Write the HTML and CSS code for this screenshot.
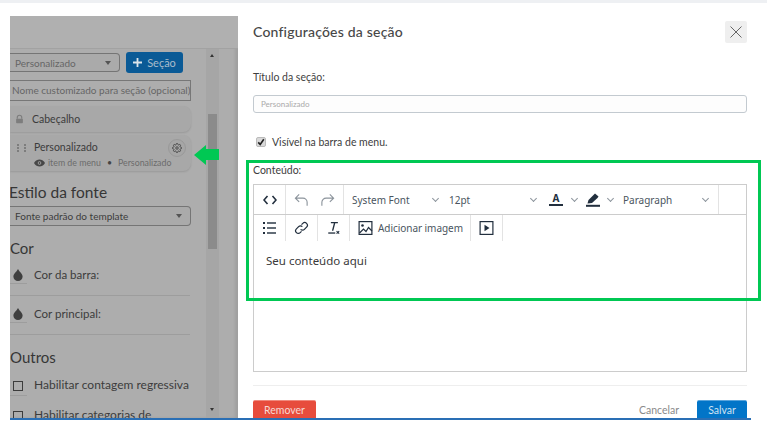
FILE: index.html
```html
<!DOCTYPE html>
<html lang="pt-BR">
  <head>
    <meta charset="UTF-8" />
    <title>Configurações da seção</title>
    <link rel="stylesheet" href="styles.css">
  </head>
  <body>
    <div class="top-strip"></div>
    <div class="shot">
      <div class="backdrop">
        <div class="backdrop-head"></div>
        <div class="backdrop-main">
          <div class="side-list">
            <div class="add-row">
              <div class="fake-select add-select"><span>Personalizado</span><i class="caret"></i></div>
              <div class="add-button">
                <svg viewBox="0 0 10 10"><path d="M4 0h2v4h4v2H6v4H4V6H0V4h4z" fill="#dce4ea"/></svg>
                <span>Seção</span>
              </div>
            </div>
            <div class="name-input">Nome customizado para seção (opcional)</div>
            <div class="section-card locked">
              <svg class="lock" viewBox="0 0 12 12"><path d="M3 5.500V4a3 3 0 0 1 6 0v1.500" fill="none" stroke="#7d7d7d" stroke-width="1.500"/><rect x="1.500" y="5.500" width="9" height="6" rx="1" fill="#7d7d7d"/></svg>
              <span>Cabeçalho</span>
            </div>
            <div class="section-card custom">
              <svg class="grip" viewBox="0 0 9 8" fill="#7d7d7d"><rect width="2" height="2"/><rect y="3" width="2" height="2"/><rect y="6" width="2" height="2"/><rect x="7" width="2" height="2"/><rect x="7" y="3" width="2" height="2"/><rect x="7" y="6" width="2" height="2"/></svg>
              <div class="custom-text">
                <div class="custom-name">Personalizado</div>
                <div class="custom-meta">
                  <svg class="eye" viewBox="0 0 14 10"><path d="M0 5c2-3.500 4.500-4.500 7-4.500S12 1.500 14 5c-2 3.500-4.500 4.500-7 4.500S2 8.500 0 5z" fill="#474747"/><circle cx="7" cy="5" r="2.300" fill="#a6a6a6"/><circle cx="7" cy="5" r="1.200" fill="#474747"/></svg>
                  <span>item de menu</span><em>•</em><span>Personalizado</span>
                </div>
              </div>
              <div class="gear">
                <svg viewBox="0 0 24 24" fill="none" stroke="#3c3c3c" stroke-width="2"><circle cx="12" cy="12" r="3"/><path d="M19.400 15a1.700 1.700 0 0 0 .3 1.800l.1.100a2 2 0 1 1-2.900 2.900l-.1-.1a1.700 1.700 0 0 0-2.800 1.200V21a2 2 0 1 1-4 0v-.1a1.700 1.700 0 0 0-2.900-1.200l-.1.100a2 2 0 1 1-2.800-2.900l.1-.1a1.700 1.700 0 0 0-1.200-2.800H3a2 2 0 1 1 0-4h.1a1.700 1.700 0 0 0 1.200-2.900l-.1-.1a2 2 0 1 1 2.900-2.800l.1.100a1.700 1.700 0 0 0 1.800.3h.1a1.700 1.700 0 0 0 1-1.500V3a2 2 0 1 1 4 0v.1a1.700 1.700 0 0 0 2.800 1.200l.1-.1a2 2 0 1 1 2.900 2.800l-.1.100a1.700 1.700 0 0 0-.3 1.800v.1a1.700 1.700 0 0 0 1.500 1H21a2 2 0 1 1 0 4h-.1a1.700 1.700 0 0 0-1.500 1z"/></svg>
              </div>
            </div>
            <h4 class="font-title">Estilo da fonte</h4>
            <div class="fake-select font-select"><span>Fonte padrão do template</span><i class="caret"></i></div>
            <h4 class="color-title">Cor</h4>
            <div class="color-row">
              <div class="swatch"><svg class="drop" viewBox="0 0 10 13"><path d="M5 0c1 2.500 5 5 5 8.200A5 4.800 0 0 1 0 8.200C0 5 4 2.500 5 0z" fill="#3f3f3f"/></svg></div>
              <span>Cor da barra:</span>
            </div>
            <div class="color-row">
              <div class="swatch"><svg class="drop" viewBox="0 0 10 13"><path d="M5 0c1 2.500 5 5 5 8.200A5 4.800 0 0 1 0 8.200C0 5 4 2.500 5 0z" fill="#3f3f3f"/></svg></div>
              <span>Cor principal:</span>
            </div>
            <h4 class="others-title">Outros</h4>
            <div class="check-row"><div class="swatch"><i class="box"></i></div><span>Habilitar contagem regressiva</span></div>
            <div class="check-row"><div class="swatch"><i class="box"></i></div><span>Habilitar categorias de</span></div>
          </div>
          <div class="scrollbar">
            <i class="arrow-up"></i>
            <div class="thumb"></div>
            <i class="arrow-down"></i>
          </div>
        </div>
      </div>

      <div class="modal">
        <div class="modal-head">
          <h3>Configurações da seção</h3>
          <button class="close-button">
            <svg viewBox="0 0 12 12" fill="none" stroke="#666" stroke-width="1"><path d="M.5.5l11 11M11.500.5l-11 11"/></svg>
          </button>
        </div>
        <label class="field-label">Título da seção:</label>
        <div class="title-input">Personalizado</div>
        <div class="visible-row">
          <i class="checked">
            <svg viewBox="0 0 10 10" fill="none" stroke="#222" stroke-width="2"><path d="M1.500 5.500l2.500 2.500 4.500-6.500"/></svg>
          </i>
          <span>Visível na barra de menu.</span>
        </div>
        <label class="content-label">Conteúdo:</label>
        <div class="editor">
          <div class="tool-row first">
            <div class="tool-group w-32">
              <svg class="ico" viewBox="0 0 14 10" fill="none" stroke="#222f3e" stroke-width="1.600"><path d="M4.500 1L1 5l3.500 4M9.500 1L13 5 9.500 9"/></svg>
            </div>
            <div class="tool-group w-58">
              <svg class="ico big" viewBox="0 0 16 14" fill="none" stroke="#8c949c" stroke-width="1.200"><path d="M5.500 1L1.500 5l4 4M1.500 5h8a4.500 4.500 0 0 1 4.500 4.500V13"/></svg>
              <svg class="ico big" viewBox="0 0 16 14" fill="none" stroke="#8c949c" stroke-width="1.200"><path d="M10.500 1l4 4-4 4M14.500 5h-8A4.500 4.500 0 0 0 2 9.500V13"/></svg>
            </div>
            <div class="tool-group w-375">
              <span class="menu-text font-name">System Font</span><i class="chev"></i>
              <span class="menu-text size-name">12pt</span><i class="chev"></i>
              <span class="color-a">A</span><i class="chev a-chev"></i>
              <svg class="pen" viewBox="0 0 14 14"><path d="M1.500 10.500l1-3.500L8 1.500l1-1 3.500 3-1 1.500-5.500 5z" fill="#222f3e"/><rect y="11.800" width="14" height="2" fill="#222f3e"/></svg><i class="chev pen-chev"></i>
              <span class="menu-text para-name">Paragraph</span><i class="chev"></i>
            </div>
          </div>
          <div class="tool-row second">
            <div class="tool-group w-32">
              <svg class="ico list" viewBox="0 0 13 12" fill="#222f3e"><rect width="2" height="2" y="0"/><rect width="2" height="2" y="5"/><rect width="2" height="2" y="10"/><rect x="4" width="9" height="1.400" y=".3"/><rect x="4" width="9" height="1.400" y="5.300"/><rect x="4" width="9" height="1.400" y="10.300"/></svg>
            </div>
            <div class="tool-group w-32">
              <svg class="ico big" viewBox="0 0 16 16" fill="none" stroke="#222f3e" stroke-width="1.400"><path d="M7 9.500a3 3 0 0 0 4.300 0l2.500-2.500a3 3 0 0 0-4.300-4.300L8 4.200"/><path d="M9 6.500a3 3 0 0 0-4.300 0L2.200 9a3 3 0 0 0 4.300 4.300L8 11.800"/></svg>
            </div>
            <div class="tool-group w-32">
              <svg class="ico big" viewBox="0 0 16 16"><path d="M5 1h8v1.500h-3L7.800 11H6.200L8.400 2.500H5z" fill="#222f3e"/><rect x="2" y="13" width="8" height="1.500" fill="#222f3e"/><path d="M11.500 11.500l3 3M14.500 11.500l-3 3" stroke="#222f3e" stroke-width="1.200"/></svg>
            </div>
            <div class="tool-group image-tool">
              <svg class="ico big" viewBox="0 0 14 14" fill="none" stroke="#222f3e" stroke-width="1.200"><rect x=".6" y=".6" width="12.800" height="12.800"/><circle cx="4" cy="4.500" r="1.300" fill="#222f3e" stroke="none"/><path d="M1 12l4-4 2.500 2.500L10 6.500l3.500 3.500"/></svg>
              <span class="menu-text">Adicionar imagem</span>
            </div>
            <div class="tool-group w-32">
              <svg class="ico big" viewBox="0 0 14 14"><rect x=".6" y=".6" width="12.800" height="12.800" fill="none" stroke="#222f3e" stroke-width="1.200"/><path d="M5 3.800l5 3.200-5 3.200z" fill="#222f3e"/></svg>
            </div>
          </div>
          <div class="editor-body">Seu conteúdo aqui</div>
        </div>
        <div class="modal-foot">
          <button class="remove-button">Remover</button>
          <span class="cancel-link">Cancelar</span>
          <button class="save-button">Salvar</button>
        </div>
      </div>
    </div>

    <div class="green-box"></div>
    <svg class="green-arrow" viewBox="0 0 25 20"><path d="M0 10L12 0v4h13v11H12v5z" fill="#00c853"/></svg>
  </body>
</html>
```

FILE: styles.css
```css
html,
body {
  margin: 0;
  height: 436px;
  overflow: hidden;
  background: white;
}
body {
  font-family: Lato, "Liberation Sans", sans-serif;
  position: relative;
}
h3,
h4 {
  margin: 0;
  font-weight: 400;
}
button {
  font-family: inherit;
  border: none;
  padding: 0;
}
.top-strip {
  height: 3px;
  background-color: #eef0f3;
}
.shot {
  display: flex;
  width: 741px;
  height: 402px;
  margin: 13px 0 0 10px;
  border-bottom: 2px solid #2a6fb5;
}

/* painel de tras, escurecido */
.backdrop {
  width: 228px;
  flex: none;
  background-color: #adadad;
  display: flex;
  flex-direction: column;
  overflow: hidden;
  box-shadow: inset -3px 0 3px rgba(0, 0, 0, 0.08);
}
.backdrop-head {
  height: 32px;
  flex: none;
  background-color: #b0b0b0;
  border-bottom: 1px solid #a2a2a2;
}
.backdrop-main {
  display: flex;
  flex: 1;
  min-height: 0;
}
.side-list {
  width: 196px;
  flex: none;
  color: #3c3c3c;
}
.add-row {
  display: flex;
  gap: 6px;
  margin-top: 3px;
}
.fake-select {
  display: flex;
  align-items: center;
  justify-content: space-between;
  box-sizing: border-box;
  border: 1px solid #757575;
  border-left: none;
  border-radius: 0 4px 4px 0;
  background-color: #aaa;
  font-size: 10px;
  padding: 0 8px 0 5px;
}
.add-select {
  width: 110px;
  height: 19px;
  margin-top: 1px;
  color: #666;
}
.caret {
  width: 0;
  height: 0;
  border-left: 3px solid transparent;
  border-right: 3px solid transparent;
  border-top: 4px solid #555;
}
.add-button {
  display: flex;
  align-items: center;
  justify-content: center;
  gap: 5px;
  width: 57px;
  height: 21px;
  border-radius: 3px;
  background-color: #0a5a96;
  color: #a9bccb;
  font-size: 11px;
}
.add-button svg {
  width: 9px;
  height: 9px;
}
.name-input {
  box-sizing: border-box;
  width: 181px;
  height: 21px;
  margin-top: 7px;
  border: 1px solid #777;
  border-left: none;
  font-size: 10px;
  line-height: 19px;
  padding-left: 2px;
  color: #666;
  white-space: nowrap;
  overflow: hidden;
}
.section-card {
  box-sizing: border-box;
  width: 181px;
  border-radius: 0 8px 8px 0;
  background-color: #a8a8a8;
  box-shadow: 0 1px 2px rgba(0, 0, 0, 0.12);
  display: flex;
}
.locked {
  height: 26px;
  margin-top: 5px;
  align-items: center;
  padding-left: 5px;
  font-size: 10.500px;
  gap: 8px;
}
.lock {
  width: 9px;
  height: 10px;
}
.custom {
  height: 36px;
  margin-top: 3px;
  padding: 6px 0 0 7px;
  position: relative;
}
.grip {
  width: 9px;
  height: 8px;
  margin-top: 3px;
  flex: none;
}
.custom-text {
  margin-left: 8px;
}
.custom-name {
  font-size: 10.500px;
  line-height: 13px;
}
.custom-meta {
  display: flex;
  align-items: center;
  gap: 2px;
  margin-top: 3px;
  font-size: 8.800px;
  line-height: 12px;
  color: #6c6c6c;
  white-space: nowrap;
}
.custom-meta em {
  font-style: normal;
  margin: 0 4px;
  color: #444;
}
.eye {
  width: 11px;
  height: 8px;
  margin-right: 1px;
}
.gear {
  position: absolute;
  top: 4px;
  right: 5px;
  box-sizing: border-box;
  width: 18px;
  height: 18px;
  border-radius: 50%;
  border: 1px solid #999;
  background-color: #a6a6a6;
  padding: 3px;
  display: flex;
}
.gear svg {
  width: 100%;
  height: 100%;
}
.font-title {
  margin: 12px 0 0 -1px;
  font-size: 15.500px;
  line-height: 19px;
  color: #363636;
}
.font-select {
  width: 181px;
  height: 20px;
  margin-top: 4px;
  color: #3c3c3c;
}
.color-title {
  margin: 13px 0 3px;
  font-size: 15px;
  line-height: 18px;
  color: #363636;
}
.color-row {
  box-sizing: border-box;
  display: flex;
  align-items: flex-start;
  gap: 7px;
  width: 180px;
  height: 36px;
  font-size: 11.500px;
  line-height: 30px;
  border-bottom: 1px solid #9d9d9d;
}
.color-row + .color-row {
  padding-top: 3px;
  height: 39px;
}
.swatch {
  box-sizing: border-box;
  width: 17px;
  height: 24px;
  flex: none;
  display: flex;
  align-items: center;
  padding: 6px 0 0 3px;
  border-bottom: 1px solid #9d9d9d;
}
.drop {
  width: 10px;
  height: 12px;
}
.others-title {
  margin-top: 13px;
  font-size: 15px;
  line-height: 18px;
  color: #363636;
}
.check-row {
  display: flex;
  align-items: flex-start;
  gap: 7px;
  height: 24px;
  margin-top: 6px;
  font-size: 12px;
  line-height: 26px;
  white-space: nowrap;
}
.check-row .swatch {
  padding-top: 4px;
}
.box {
  box-sizing: border-box;
  width: 10px;
  height: 10px;
  border: 1px solid #3c3c3c;
  flex: none;
}
.scrollbar {
  width: 13px;
  background-color: #a6a6a6;
  position: relative;
}
.thumb {
  position: absolute;
  top: 65px;
  left: 2px;
  width: 9px;
  height: 135px;
  background-color: #8b8b8b;
}
.arrow-up,
.arrow-down {
  position: absolute;
  left: 4px;
  width: 0;
  height: 0;
  border-left: 2.500px solid transparent;
  border-right: 2.500px solid transparent;
}
.arrow-up {
  top: 5px;
  border-bottom: 3px solid #333;
}
.arrow-down {
  bottom: 7px;
  border-top: 3px solid #333;
}

/* modal */
.modal {
  flex: 1;
  box-sizing: border-box;
  padding: 0 4px 0 15px;
  overflow: hidden;
  color: #3d3d3d;
}
.modal-head {
  display: flex;
  align-items: center;
  justify-content: space-between;
  height: 31px;
}
.modal-head h3 {
  font-size: 14px;
  letter-spacing: 0.2px;
  font-weight: 500;
  color: #474747;
}
.close-button {
  width: 22px;
  height: 22px;
  border-radius: 2px;
  background-color: #efefef;
  display: flex;
  align-items: center;
  justify-content: center;
}
.close-button svg {
  width: 12px;
  height: 12px;
}
.field-label {
  display: block;
  margin-top: 24px;
  font-size: 10.500px;
  line-height: 13px;
  color: #3f3f3f;
}
.title-input {
  box-sizing: border-box;
  height: 18px;
  margin-top: 11px;
  border: 1px solid #c3cad0;
  border-radius: 3px;
  font-size: 8px;
  line-height: 16px;
  padding-left: 7px;
  color: #aaa;
  background-color: #fdfdfd;
}
.visible-row {
  display: flex;
  align-items: center;
  gap: 6px;
  margin-top: 22px;
  margin-left: 3px;
  font-size: 10.500px;
  line-height: 14px;
}
.checked {
  box-sizing: border-box;
  width: 10px;
  height: 10px;
  border-radius: 2px;
  background-color: #d9d9d9;
  border: 1px solid #bbb;
  display: flex;
}
.content-label {
  display: block;
  margin-top: 15px;
  font-size: 10.500px;
  line-height: 13px;
}

/* editor */
.editor {
  box-sizing: border-box;
  height: 188px;
  margin-top: 7px;
  border: 1px solid #ccc;
  font-family: "Noto Sans", "Open Sans", sans-serif;
  color: #222f3e;
}
.tool-row {
  display: flex;
  height: 29px;
}
.tool-row.first {
  border-bottom: 1px solid #ccc;
}
.tool-row.second {
  height: 26px;
}
.tool-group {
  box-sizing: border-box;
  display: flex;
  align-items: center;
  justify-content: center;
  border-right: 1px solid #e3e3e3;
  flex: none;
}
.w-32 {
  width: 32px;
}
.w-58 {
  width: 58px;
  gap: 11px;
}
.w-375 {
  width: 375px;
  justify-content: flex-start;
}
.ico {
  width: 14px;
  height: 10px;
}
.ico.big {
  width: 15px;
  height: 14px;
}
.ico.list {
  width: 13px;
  height: 12px;
}
.menu-text {
  font-size: 10px;
  color: #4a5560;
  white-space: nowrap;
}
.font-name {
  margin-left: 8px;
  width: 81px;
}
.chev {
  width: 4px;
  height: 4px;
  border-right: 1px solid #8c949c;
  border-bottom: 1px solid #8c949c;
  transform: rotate(45deg);
  margin-top: -3px;
  flex: none;
}
.size-name {
  margin-left: 11px;
  width: 82px;
}
.color-a {
  margin-left: 13px;
  width: 14px;
  font-size: 10px;
  font-weight: 700;
  line-height: 11px;
  text-align: center;
  border-bottom: 2px solid #222f3e;
}
.a-chev {
  margin-left: 9px;
}
.pen {
  margin-left: 9px;
  width: 14px;
  height: 14px;
}
.pen-chev {
  margin-left: 8px;
}
.para-name {
  margin-left: 10px;
  width: 80px;
}
.image-tool {
  width: 121px;
  justify-content: flex-start;
  padding-left: 8px;
  gap: 5px;
}
.image-tool .menu-text {
  letter-spacing: -0.05px;
}
.editor-body {
  padding: 12px;
  font-size: 11.500px;
  line-height: 16px;
  color: #3a3a3a;
}
.modal-foot {
  display: flex;
  align-items: flex-start;
  margin-top: 13px;
  padding-top: 14px;
  border-top: 1px solid #eee;
  font-size: 10.500px;
}
.remove-button,
.save-button {
  height: 24px;
  border-radius: 2px;
  color: #f6d9d5;
  font-size: 10.500px;
  text-align: center;
  padding-bottom: 6px;
}
.remove-button {
  width: 63px;
  background-color: #e74c3c;
  border-top: 1px solid #f08a7e;
}
.cancel-link {
  margin-left: auto;
  margin-top: 4px;
  color: #8a8a8a;
}
.save-button {
  width: 50px;
  margin-left: 18px;
  background-color: #0275c8;
  border-top: 1px solid #5aa5dc;
  color: #cfe3f3;
}

/* marcacoes por cima do print */
.green-box {
  position: absolute;
  left: 246px;
  top: 160px;
  box-sizing: border-box;
  width: 515px;
  height: 141px;
  border: 3px solid #00c853;
}
.green-arrow {
  position: absolute;
  left: 194px;
  top: 145px;
  width: 25px;
  height: 20px;
}
```
